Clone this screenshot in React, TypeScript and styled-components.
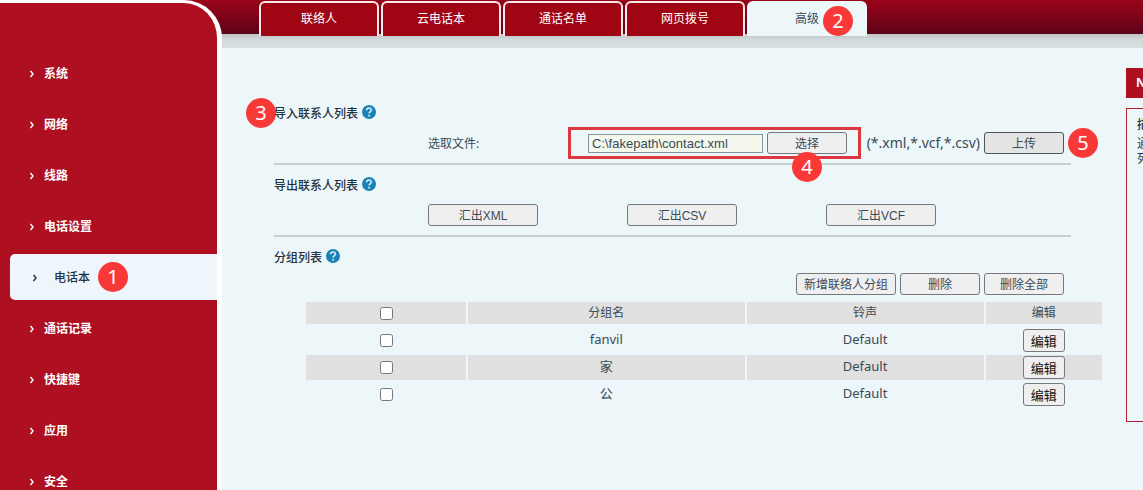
import React, { useState } from "react";
import styled, { createGlobalStyle } from "styled-components";

const color = {
  red: "#ae0f21",
  tabRed: "#a00513",
  page: "#edf6f9",
  active: "#eef6fc",
  text: "#3a4a56",
  heading: "#1f3440",
  stripe: "#e0e0e0",
  rule: "#c6cfd1",
  mark: "#f93838",
};

const GlobalStyle = createGlobalStyle`
  * { box-sizing: border-box; }
  body {
    margin: 0;
    background: ${color.page};
    color: ${color.text};
    font-family: "Noto Sans", "Noto Sans CJK SC", sans-serif;
    font-size: 12px;
    line-height: 16px;
  }
  button, input { font: inherit; color: inherit; margin: 0; }
`;

const Shell = styled.div`
  display: flex;
  height: 100vh;
  overflow: hidden;
  background:
    linear-gradient(#98041a, #8a0319 30%, #5c0319) 0 0 / 100% 34px no-repeat,
    linear-gradient(#bfc4c6, #d3d9da 40%, #d9e0e1) 0 34px / 100% 14px no-repeat,
    ${color.page};
`;

const Sidebar = styled.nav`
  flex: 0 0 222px;
  padding-top: 45px;
  border-top: 3px solid #fff;
  border-right: 5px solid #fff;
  border-top-right-radius: 38px;
  background: ${color.red};
  overflow: hidden;
`;

const Menu = styled.ul`
  margin: 0;
  padding: 0;
  list-style: none;
`;

const MenuItem = styled.li<{ $active?: boolean }>`
  display: flex;
  align-items: center;
  height: ${(p) => (p.$active ? 46 : 51)}px;
  margin: ${(p) => (p.$active ? "2px 0 3px 10px" : "0")};
  padding-left: ${(p) => (p.$active ? 22 : 29)}px;
  border-radius: 5px 0 0 5px;
  background: ${(p) => (p.$active ? color.active : "transparent")};
  color: ${(p) => (p.$active ? color.heading : "#fff")};
`;

const MenuLink = styled.a<{ $active?: boolean }>`
  display: flex;
  align-items: center;
  gap: ${(p) => (p.$active ? 16 : 9)}px;
  padding-top: 1px;
  color: inherit;
  font-weight: ${(p) => (p.$active ? 500 : 700)};
  text-decoration: none;
`;

const Badge = styled.span`
  display: flex;
  align-items: center;
  justify-content: center;
  flex: none;
  width: 30px;
  height: 30px;
  border-radius: 50%;
  background: ${color.mark};
  color: #fff;
  font-size: 20px;
  font-weight: 400;
  line-height: 30px;
`;

const MenuBadge = styled(Badge)`
  margin-left: 8px;
`;

const TabBadge = styled(Badge)`
  position: absolute;
  top: 3px;
  left: 74px;
`;

const HeadingBadge = styled(Badge)`
  position: absolute;
  top: -3px;
  left: -28px;
  z-index: -1;
`;

const PickerBadge = styled(Badge)`
  position: absolute;
  top: 22px;
  right: 36px;
`;

const UploadBadge = styled(Badge)`
  margin-left: 4px;
`;

const Body = styled.div`
  flex: 1;
  min-width: 0;
`;

const Tabs = styled.nav`
  display: flex;
  gap: 2px;
  padding: 1px 0 0 37px;
`;

const Tab = styled.a<{ $active?: boolean }>`
  position: relative;
  width: 120px;
  height: 35px;
  border: 2px solid ${(p) => (p.$active ? color.page : "#fbe9ea")};
  border-bottom: 0;
  border-radius: 6px 6px 0 0;
  background: ${(p) => (p.$active ? color.page : color.tabRed)};
  color: ${(p) => (p.$active ? color.text : "#fff")};
  line-height: 32px;
  text-align: center;
  text-decoration: none;
`;

const Columns = styled.div`
  display: flex;
  align-items: flex-start;
  padding-top: 32px;
`;

const Main = styled.main`
  flex: 1;
  min-width: 0;
  padding: 33px 22px 0 52px;
`;

const Section = styled.section`
  margin: 0 33px 8px 0;
  border-bottom: 2px solid ${color.rule};
`;

const GroupSection = styled.section`
  padding-bottom: 20px;
`;

const Heading = styled.h2`
  position: relative;
  z-index: 0;
  display: flex;
  align-items: center;
  gap: 4px;
  height: 24px;
  margin: 0;
  padding-top: 2px;
  color: ${color.heading};
  font-size: 12px;
  font-weight: 500;
`;

const HelpIcon = styled.svg`
  width: 14px;
  height: 14px;
  margin-bottom: 4px;
`;

const UploadRow = styled.div`
  display: flex;
  align-items: center;
  height: 32px;
  margin: 2px 0 4px 154px;
  white-space: nowrap;
`;

const FieldLabel = styled.label`
  flex: 0 0 140px;
  padding-top: 1px;
`;

const FilePicker = styled.div`
  position: relative;
  display: flex;
  flex: none;
  align-items: center;
  gap: 4px;
  height: 32px;
  padding: 0 11px 0 17px;
  border: 3px solid #dd3840;
`;

const PathInput = styled.input`
  width: 175px;
  height: 19px;
  padding: 0 3px;
  border: 1px solid #8795a0;
  border-radius: 0;
  background: #f4f8ec;
  font-family: "Liberation Sans", sans-serif;
  font-size: 13px;
`;

const Formats = styled.span`
  flex: 0 0 119px;
  margin-right: 4px;
  font-size: 14px;
  text-align: right;
`;

const Button = styled.button<{ $width: number; $pressed?: boolean }>`
  flex: none;
  width: ${(p) => p.$width}px;
  height: 22px;
  padding: 2px 0 0;
  border: 1px solid ${(p) => (p.$pressed ? "#4c5660" : "#75797e")};
  border-radius: 3px;
  background: ${(p) => (p.$pressed ? "#e4e4e5" : "#efeff0")};
  font-family: "Liberation Sans", "Noto Sans CJK SC", sans-serif;
  line-height: 18px;
  white-space: nowrap;
`;

const EditButton = styled(Button)`
  display: block;
  height: 23px;
  margin: 0 auto;
  color: #111;
  font-size: 13px;
`;

const ExportRow = styled.div`
  display: flex;
  gap: 89px;
  margin: 7px 0 9px 154px;
`;

const Actions = styled.div`
  display: flex;
  justify-content: flex-end;
  gap: 4px;
  margin: 4px 40px 5px 0;
`;

const TableWrap = styled.div`
  margin-left: 30px;
`;

const Table = styled.table`
  width: 100%;
  border-spacing: 2px;
  table-layout: fixed;
  text-align: center;

  th {
    height: 24px;
    padding: 0;
    border-bottom: 2px solid transparent;
    background: ${color.stripe};
    background-clip: padding-box;
    font-weight: 400;
  }
  td {
    height: 25px;
    padding: 0;
  }
  tbody tr:nth-child(even) td {
    background: ${color.stripe};
  }
`;

const Col = styled.col<{ $width: string }>`
  width: ${(p) => p.$width};
`;

const Value = styled.td`
  && {
    padding-bottom: 3px;
  }
  font-size: 13px;
`;

const Check = styled.input`
  display: block;
  width: 13px;
  height: 13px;
  margin: 0 auto;
`;

const Aside = styled.aside`
  flex: 0 0 17px;
  overflow: hidden;
  color: ${color.heading};
  white-space: nowrap;
`;

const NoteTitle = styled.div`
  height: 30px;
  padding-left: 10px;
  background: ${color.red};
  color: #fff;
  font-weight: 700;
  line-height: 30px;
`;

const NoteBox = styled.div`
  height: 314px;
  margin-top: 10px;
  padding: 8px 0 0 10px;
  border: 1px solid #b3202b;
  border-right: 0;
`;

const NoteHead = styled.div`
  margin-bottom: 3px;
  font-weight: 500;
`;

const NoteLine = styled.div`
  line-height: 15px;
`;

function Chevron() {
  return (
    <svg width="6" height="8" viewBox="0 0 6 8" fill="none" aria-hidden="true">
      <path d="M1.5 1 L4 4 L1.5 7" stroke="currentColor" strokeWidth="1.4" />
    </svg>
  );
}

function Help() {
  return (
    <HelpIcon viewBox="0 0 14 14" aria-hidden="true">
      <circle cx="7" cy="7" r="7" fill="#1c81b4" />
      <path
        d="M4.7 5.2 C4.7 2.3 9.4 2.3 9.4 5.1 C9.4 6.7 7.1 6.6 7.1 8.6"
        fill="none"
        stroke="#d9eef7"
        strokeWidth="1.6"
      />
      <circle cx="7.1" cy="10.7" r="1" fill="#d9eef7" />
    </HelpIcon>
  );
}

const menu = ["系统", "网络", "线路", "电话设置", "电话本", "通话记录", "快捷键", "应用", "安全"];
const tabs = ["联络人", "云电话本", "通话名单", "网页拨号", "高级"];
const exportsList = ["汇出XML", "汇出CSV", "汇出VCF"];
const groups = [
  { name: "fanvil", ring: "Default" },
  { name: "家", ring: "Default" },
  { name: "公", ring: "Default" },
];

export default function App() {
  const [path, setPath] = useState("C:\\fakepath\\contact.xml");

  return (
    <>
      <GlobalStyle />
      <Shell>
        <Sidebar>
          <Menu>
            {menu.map((name) => {
              const active = name === "电话本";
              return (
                <MenuItem key={name} $active={active}>
                  <MenuLink href="#" $active={active}>
                    <Chevron />
                    {name}
                  </MenuLink>
                  {active && <MenuBadge>1</MenuBadge>}
                </MenuItem>
              );
            })}
          </Menu>
        </Sidebar>

        <Body>
          <Tabs>
            {tabs.map((name) => (
              <Tab key={name} href="#" $active={name === "高级"}>
                {name}
                {name === "高级" && <TabBadge>2</TabBadge>}
              </Tab>
            ))}
          </Tabs>

          <Columns>
            <Main>
              <Section>
                <Heading>
                  <HeadingBadge>3</HeadingBadge>
                  导入联系人列表
                  <Help />
                </Heading>
                <UploadRow>
                  <FieldLabel htmlFor="path">选取文件:</FieldLabel>
                  <FilePicker>
                    <PathInput id="path" value={path} onChange={(e) => setPath(e.target.value)} />
                    <Button $width={80}>选择</Button>
                    <PickerBadge>4</PickerBadge>
                  </FilePicker>
                  <Formats>(*.xml,*.vcf,*.csv)</Formats>
                  <Button $width={80} $pressed>
                    上传
                  </Button>
                  <UploadBadge>5</UploadBadge>
                </UploadRow>
              </Section>

              <Section>
                <Heading>
                  导出联系人列表
                  <Help />
                </Heading>
                <ExportRow>
                  {exportsList.map((name) => (
                    <Button key={name} $width={110}>
                      {name}
                    </Button>
                  ))}
                </ExportRow>
              </Section>

              <GroupSection>
                <Heading>
                  分组列表
                  <Help />
                </Heading>
                <Actions>
                  <Button $width={100}>新增联络人分组</Button>
                  <Button $width={80}>删除</Button>
                  <Button $width={80}>删除全部</Button>
                </Actions>
                <TableWrap>
                  <Table>
                    <colgroup>
                      <Col $width="160px" />
                      <Col $width="35%" />
                      <Col $width="30%" />
                      <Col $width="auto" />
                    </colgroup>
                    <thead>
                      <tr>
                        <th>
                          <Check type="checkbox" aria-label="全部" />
                        </th>
                        <th>分组名</th>
                        <th>铃声</th>
                        <th>编辑</th>
                      </tr>
                    </thead>
                    <tbody>
                      {groups.map((g) => (
                        <tr key={g.name}>
                          <td>
                            <Check type="checkbox" aria-label={g.name} />
                          </td>
                          <Value>{g.name}</Value>
                          <Value>{g.ring}</Value>
                          <td>
                            <EditButton $width={42}>编辑</EditButton>
                          </td>
                        </tr>
                      ))}
                    </tbody>
                  </Table>
                </TableWrap>
              </GroupSection>
            </Main>

            <Aside>
              <NoteTitle>N</NoteTitle>
              <NoteBox>
                <NoteHead>描</NoteHead>
                <NoteLine>通</NoteLine>
                <NoteLine>列</NoteLine>
              </NoteBox>
            </Aside>
          </Columns>
        </Body>
      </Shell>
    </>
  );
}
